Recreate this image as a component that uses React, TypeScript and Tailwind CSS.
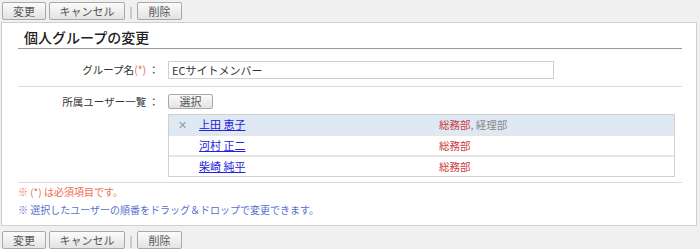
const font = { fontFamily: '"Noto Sans CJK JP", "Noto Sans", sans-serif' };

function Btn({ label, w }: { label: string; w: string }) {
  return (
    <button
      className={`${w} h-[18px] rounded-[2px] border border-[#a9a9a9] bg-gradient-to-b from-[#fbfbfb] to-[#e3e3e3] text-[11px] leading-[16px] text-[#555]`}
    >
      {label}
    </button>
  );
}

function ActionBar() {
  return (
    <div className="flex items-center h-[18px] pl-[2px]">
      <Btn label="変更" w="w-[44px]" />
      <span className="ml-[3px]" />
      <Btn label="キャンセル" w="w-[76px]" />
      <span className="w-[12px] text-center text-[11px] text-[#888]">|</span>
      <Btn label="削除" w="w-[45px]" />
    </div>
  );
}

const members = [
  { name: "上田 恵子", dept: "総務部", extra: "経理部", active: true },
  { name: "河村 正二", dept: "総務部" },
  { name: "柴崎 純平", dept: "総務部" },
];

export default function App() {
  return (
    <div className="w-[700px] h-[249px] bg-[#f0f0f0] text-[12px] text-[#333]" style={font}>
      <div className="pt-[2px]">
        <ActionBar />
      </div>
      <div className="mt-[2px] ml-[1px] mr-[3px] h-[204px] border border-[#cfcfcf] bg-white pl-[16px] pr-[14px] pt-[5px]">
        <h1 className="pl-[6px] text-[14px] leading-[19px] font-medium text-[#222] border-b border-[#9a9a9a] pb-[1px]">
          個人グループの変更
        </h1>

        <div className="flex items-center h-[38px] pt-[4px] border-b border-[#dcdcdc]">
          <div className="w-[150px] text-right pr-[9px] text-[10.5px]">
            グループ名<span className="text-[#f06a50]">(*)</span> ：
          </div>
          <input
            readOnly
            value="ECサイトメンバー"
            className="w-[386px] h-[18px] border border-[#cfcfcf] px-[3px] text-[11px] text-[#333] outline-none"
            style={font}
          />
        </div>

        <div className="flex pt-[7px] pb-[5px] border-b border-[#dcdcdc]">
          <div className="w-[150px] text-right pr-[9px] leading-[15px] text-[10.5px]">所属ユーザー一覧 ：</div>
          <div className="flex flex-col">
            <button className="w-[45px] h-[15px] rounded-[2px] border border-[#a9a9a9] bg-gradient-to-b from-[#fbfbfb] to-[#e3e3e3] text-[11px] leading-[13px] text-[#555]">
              選択
            </button>
            <div className="mt-[5px] w-[507px] border border-[#d0d0d0]">
              {members.map((m, i) => (
                <div
                  key={i}
                  className={`flex items-center text-[11px] ${i > 0 ? "h-[21px] border-t-2 border-[#e6e6e6]" : "h-[19px]"} ${m.active ? "bg-[#dfe9f3]" : "bg-white"}`}
                >
                  <span className="w-[30px] pl-[9px] text-[#999] text-[11px]">{m.active ? "✕" : ""}</span>
                  <a className="w-[240px] text-[#2222dd] underline">{m.name}</a>
                  <span className="text-[#cc3b3b] text-[10.5px]">
                    {m.dept}
                    {m.extra && <span className="text-[#888]">, {m.extra}</span>}
                  </span>
                </div>
              ))}
            </div>
          </div>
        </div>

        <div className="pt-0 text-[10px] leading-[18px]">
          <div className="text-[#f06a50]">※ (*) は必須項目です。</div>
          <div className="text-[#5b6fd0]">※ 選択したユーザーの順番をドラッグ＆ドロップで変更できます。</div>
        </div>
      </div>
      <div className="pt-[5px]">
        <ActionBar />
      </div>
    </div>
  );
}
